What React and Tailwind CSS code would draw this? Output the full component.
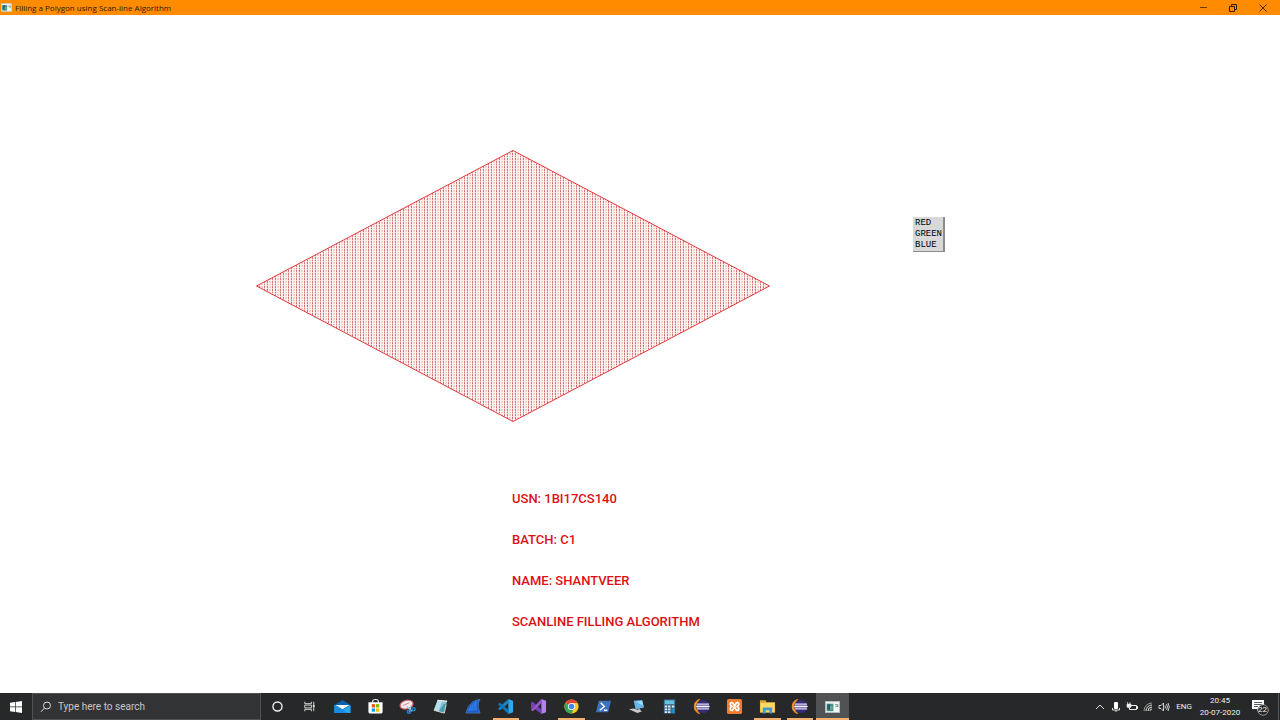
import React from "react";

const DETAILS = ["USN: 1BI17CS140", "BATCH: C1", "NAME: SHANTVEER", "SCANLINE FILLING ALGORITHM"];
const COLORS = ["RED", "GREEN", "BLUE"];

function ProgramIcon({ className }) {
  return (
    <svg viewBox="0 0 18 14" className={className} aria-hidden="true">
      <rect x="0.5" y="0.5" width="17" height="13" fill="#f2f5f4" stroke="#b9c4c4" />
      <rect x="2" y="3" width="8" height="9" fill="#3f8f86" />
      <path d="M3 4h3v6H3z" fill="#27556b" />
      <path d="M6 6h3v4H6z" fill="#69b37c" />
      <path d="M12 4h4M12 6h2" stroke="#899" strokeWidth="1" />
      <rect x="14" y="5" width="2" height="2" fill="#3c9a5a" />
    </svg>
  );
}

function TitleBar() {
  return (
    <header className="flex h-[15px] shrink-0 items-center bg-[#ff8c00] text-[#2b1600]">
      <ProgramIcon className="ml-px h-[9px] w-[11px]" />
      <h1 className="ml-[3px] flex-1 text-[8px] leading-[15px]">Filling a Polygon using Scan-line Algorithm</h1>
      <button aria-label="Minimize" className="flex h-full w-[30px] items-center justify-center">
        <svg viewBox="0 0 8 8" className="size-2"><path d="M1 3.5h7" stroke="#6b3c00" /></svg>
      </button>
      <button aria-label="Restore" className="flex h-full w-[30px] items-center justify-center">
        <svg viewBox="0 0 8 8" className="size-2" fill="none" stroke="#3a1d00">
          <path d="M0.5 2.5h5v5h-5zM2.5 2.5v-2h5v5h-2" />
        </svg>
      </button>
      <button aria-label="Close" className="mr-[2px] flex h-full w-[30px] items-center justify-center">
        <svg viewBox="0 0 8 8" className="size-2"><path d="M0.5 0.5l7 7M7.5 0.5l-7 7" stroke="#3a1d00" strokeWidth="0.9" /></svg>
      </button>
    </header>
  );
}

function Polygon() {
  return (
    <svg viewBox="0 0 514 272" className="ml-[20%] mt-[135px] block h-[272px] w-[514px]" role="img" aria-label="Filled polygon">
      <defs>
        <pattern id="scan" width="8" height="8" patternUnits="userSpaceOnUse" shapeRendering="crispEdges">
          <rect width="8" height="8" fill="#fff4f4" />
          <path d="M0 0h8v2H0zM0 3h8v2H0zM0 6h8v1H0z" fill="#ffe4e4" />
          <path d="M1 0h1v8H1zM4 0h1v8H4zM7 0h1v8H7z" fill="#fffafa" />
          <path d="M0 0h1v8H0zM3 0h1v8H3z" fill="#f0c4c6" />
          <path d="M0 0h1v2H0zM0 3h1v2H0zM0 6h1v1H0zM3 0h1v2H3zM3 3h1v2H3zM3 6h1v1H3z" fill="#cf7478" />
          <path d="M5 0h2v2H5zM5 3h2v2H5zM5 6h2v1H5z" fill="#ffcaca" />
        </pattern>
      </defs>
      <path d="M257 0.5L513.5 136L257 271.5L0.5 136Z" fill="url(#scan)" stroke="#e0383c" strokeWidth="1" />
    </svg>
  );
}

function ColorMenu() {
  return (
    <div
      role="menu"
      className="absolute left-[913px] top-[202px] flex w-8 flex-col border-b border-r-2 border-[#8c8c8c] bg-[#d8d8d8] pl-[2px] pt-px font-['Liberation_Mono',monospace] text-[9px] leading-[11px] text-black"
    >
      {COLORS.map((c) => (
        <button key={c} role="menuitem" className="block h-[11px] text-left">{c}</button>
      ))}
    </div>
  );
}

const S = "size-[17px]";

function EclipseIcon() {
  return (
    <svg viewBox="0 0 18 18" className={S}>
      <path d="M7 1.500A7.800 7.800 0 0 0 7 16.500A10 10 0 0 1 7 1.500z" fill="#ef9428" stroke="#ef9428" strokeWidth="1" />
      <circle cx="10.500" cy="9" r="7" fill="#352b78" />
      <path d="M4.200 6.500h12.800M3.700 9h13.700M4.200 11.500h12.800" stroke="#e4e0f2" strokeWidth="1.100" />
      <path d="M4 7.800h13v2.400H4z" fill="#a79fd4" />
      <path d="M3.700 9h13.700" stroke="#fff" strokeWidth="1.200" />
    </svg>
  );
}

const TASKS = [
  { name: "Cortana", icon: <svg viewBox="0 0 18 18" className={S}><circle cx="9" cy="9" r="4.8" fill="none" stroke="#eee" strokeWidth="1.5" /></svg> },
  { name: "Task View", icon: <svg viewBox="0 0 18 18" className={S} fill="none" stroke="#ddd" strokeWidth="1"><path d="M4 4v2h7V4M4 14v-2h7v2M4 7.5h7v3H4zM13.5 4v10" /><path d="M12.5 7.500h2v2h-2z" fill="#ddd" stroke="none" /></svg> },
  { name: "Mail", icon: <svg viewBox="0 0 18 18" className={S}><path d="M0.500 7.500L9 2l8.500 5.500V16H.5z" fill="#0b62b0" /><path d="M1.500 7.500h15L9 12z" fill="#fff" /><path d="M.5 7.500l8.500 5 8.500-5V16H.5z" fill="#2ba6ee" /><path d="M.5 7.500l14 8.500H.5z" fill="#1a8be0" /></svg> },
  { name: "Microsoft Store", icon: <svg viewBox="0 0 18 18" className={S}><path d="M6 5V3.500C6 1 12 1 12 3.500V5" fill="none" stroke="#eee" strokeWidth="1.200" /><path d="M1.500 4.500h15v10q0 2-2 2h-11q-2 0-2-2z" fill="#fff" /><path d="M5 6.500h3.500V10H5z" fill="#f25022" /><path d="M9.500 6.500H13V10H9.500z" fill="#7fba00" /><path d="M5 11h3.500v3.500H5z" fill="#00a4ef" /><path d="M9.500 11H13v3.500H9.500z" fill="#ffb900" /></svg> },
  { name: "Snipping Tool", icon: <svg viewBox="0 0 18 18" className={S}><ellipse cx="8" cy="7" rx="7" ry="4.500" transform="rotate(-15 8 7)" fill="#eee" stroke="#d1616b" strokeWidth="1.300" /><path d="M4 8l7-3" stroke="#c88" /><path d="M8 9l6 5M13 7l-2 8" stroke="#b8ccdc" strokeWidth="1.300" /><circle cx="10.500" cy="14.500" r="1.600" fill="none" stroke="#287dcb" strokeWidth="1.600" /><circle cx="15.500" cy="12" r="1.600" fill="none" stroke="#287dcb" strokeWidth="1.600" /></svg> },
  { name: "Notepad", icon: <svg viewBox="0 0 18 18" className={S}><path d="M6 2l10 1-3 13-11-3z" fill="#86c3d2" /><path d="M6 2l5 .5-4 11.500-5-1z" fill="#b4dfe8" /><path d="M12 7l3-1-2 10-6-1.500z" fill="#4a9bb2" /><path d="M6 2.500l10 1" stroke="#e8e8e8" strokeWidth="1.300" /><path d="M2 13l11 3 2-9" fill="none" stroke="#ded8c0" /></svg> },
  { name: "Wireshark", icon: <svg viewBox="0 0 18 18" className={S}><path d="M1 16C3 8 8 2 16 1.500c-3 4-2 9 0 14.500z" fill="#1c5cc4" stroke="#5a8fd8" strokeWidth="0.600" /><path d="M3 14C5 8 9 4 14 3c-2 3-2 7-1 10z" fill="#2a76e0" /></svg> },
  { name: "Visual Studio Code", open: true, icon: <svg viewBox="0 0 18 18" className={S}><path d="M12 1l5 2v12l-5 2z" fill="#2fa9ec" /><path d="M12 1v4.500L3 13l-2-1.500z" fill="#1687cc" /><path d="M1 6.500L3 5l9 7.500V17z" fill="#087abd" /></svg> },
  { name: "Visual Studio", icon: <svg viewBox="0 0 18 18" className={S}><path d="M12 1l5 2v12l-5 2z" fill="#b182e9" /><path d="M1 5l2-1 9 8.500V17L3 10v3l-2-1z" fill="#7541b8" /><path d="M12 1v4.500L3 14l-2-1z" fill="#9857d3" /></svg> },
  { name: "Google Chrome", open: true, icon: <svg viewBox="0 0 18 18" className={S}><circle cx="9" cy="9" r="7.500" fill="#f9c829" /><path d="M9 9L2.500 5.300A7.500 7.500 0 0 1 15.500 5.300H9z" fill="#e44235" /><path d="M9 9L2.500 5.300A7.500 7.500 0 0 0 8.800 16.500L12 10.800z" fill="#36a853" /><circle cx="9" cy="9" r="3.800" fill="#fff" /><circle cx="9" cy="9" r="2.900" fill="#4285ee" /></svg> },
  { name: "PowerShell", icon: <svg viewBox="0 0 18 18" className={S}><path d="M4 3h13l-3 12H1z" fill="#3d70bd" /><path d="M6 5l4 4-5 4M9.500 13H13" fill="none" stroke="#fff" strokeWidth="1.500" /></svg> },
  { name: "Remote Desktop", icon: <svg viewBox="0 0 18 18" className={S}><path d="M6 3l9-1 2 8-9 2z" fill="#65b6e6" /><path d="M8 4l7-1 1 5z" fill="#9bdcf8" /><path d="M11 11l2 3" stroke="#aaa" strokeWidth="2" /><path d="M1 12l5-1 9 3-5 2z" fill="#cacaca" /></svg> },
  { name: "Calculator", icon: <svg viewBox="0 0 18 18" className={S}><path d="M3 1.500h12v15H3z" fill="#38698b" /><path d="M4 2.500h10v4H4z" fill="#65c3e0" /><path d="M4 8h2.500v2H4zM7.500 8H10v2H7.500zM4 11h2.500v2H4zM7.500 11H10v2H7.500zM4 14h2.500v2H4zM7.500 14H10v2H7.500zM11.500 8H14v2h-2.500z" fill="#e1e9ee" /><path d="M11.500 11H14v5h-2.500z" fill="#1a91ce" /></svg> },
  { name: "Eclipse", icon: <EclipseIcon /> },
  { name: "XAMPP", icon: <svg viewBox="0 0 18 18" className={S}><rect x="1" y="1" width="16" height="16" rx="2" fill="#ee7d31" /><path d="M7 5H5.500Q4.500 5 4.500 6.500T6.500 9Q4.500 9.500 4.500 11.500T6 13H7L11 5h1.500q1 0 1 1.500T11.500 9q2 .5 2 2.500T12 13h-1L7 5" fill="none" stroke="#fff" strokeWidth="1.800" strokeLinejoin="round" /></svg> },
  { name: "File Explorer", open: true, icon: <svg viewBox="0 0 18 18" className={S}><path d="M1 2.500h6l1 2h9v11H1z" fill="#dda62c" /><path d="M1.500 5h15v10h-15z" fill="#ffd766" /><path d="M4 16.500V10h10v6.500h-3V13H7v3.500z" fill="#3f99d7" /></svg> },
  { name: "Eclipse workspace", open: true, icon: <EclipseIcon /> },
  { name: "Polygon program", open: true, active: true, icon: <ProgramIcon className="h-3 w-[15px]" /> },
];

function Tray() {
  return (
    <div className="ml-auto flex h-full items-center font-[Roboto,sans-serif] text-[#eee]">
      <button aria-label="Show hidden icons" className="flex w-4 justify-center">
        <svg viewBox="0 0 10 10" className="size-[10px]"><path d="M1 7l4-4 4 4" fill="none" stroke="#ddd" /></svg>
      </button>
      <button aria-label="Microphone" className="flex w-4 justify-center">
        <svg viewBox="0 0 10 12" className="h-3 w-[10px]"><rect x="3" y="1" width="4" height="7" rx="1" fill="#fff" /><path d="M1.500 7v2h7V7M5 9v2" fill="none" stroke="#ddd" /></svg>
      </button>
      <button aria-label="Battery" className="flex w-4 justify-center">
        <svg viewBox="0 0 12 10" className="h-[10px] w-3"><path d="M5 3.500h5.500v4H3.500V6" fill="none" stroke="#eee" /><path d="M11 4.500h1v2h-1zM1 2h4v3L3 6 1 5zM1.500 0v2M4 0v2" fill="#eee" stroke="#eee" strokeWidth="0.600" /></svg>
      </button>
      <button aria-label="Network" className="flex w-4 justify-center">
        <svg viewBox="0 0 12 12" className="size-3" fill="none"><path d="M2 10A8 8 0 0 1 10 2" stroke="#999" /><path d="M4 10a6 6 0 0 1 6-6M6 10a4 4 0 0 1 4-4M8 10a2 2 0 0 1 2-2" stroke="#ddd" /></svg>
      </button>
      <button aria-label="Volume" className="flex w-4 justify-center">
        <svg viewBox="0 0 12 12" className="size-3" fill="none" stroke="#ddd" strokeWidth="0.900"><path d="M1 4.500h2L5.500 2v8L3 7.500H1z" /><path d="M7 4.500q1 1.500 0 3M8.500 3q2 3 0 6M10 2q2.500 4 0 8" /></svg>
      </button>
      <button aria-label="Input language" className="flex w-6 justify-center text-[8px]">ENG</button>
      <button aria-label="Date and time" className="w-12 text-center text-[8px] leading-[12px]">
        <span className="block">20:45</span>
        <span className="block">20-07-2020</span>
      </button>
      <button aria-label="22 notifications" className="relative flex h-full w-[34px] items-center justify-center">
        <svg viewBox="0 0 20 18" className="h-[18px] w-5">
          <path d="M1 2h12v9H8l-2 2v-2H1z" fill="#fff" />
          <path d="M3 4.500h8M3 6.500h8M3 8.500h4" stroke="#333" strokeWidth="0.800" />
          <circle cx="12" cy="12" r="5.300" fill="#292929" stroke="#aaa" strokeWidth="0.800" />
        </svg>
        <span className="absolute left-[14px] top-[11px] text-[8px] leading-[12px]">22</span>
      </button>
      <span className="h-full w-[2px] border-l border-[#555]" />
    </div>
  );
}

function Taskbar() {
  return (
    <footer className="flex h-[27px] shrink-0 items-center bg-[#272829]">
      <button aria-label="Start" className="flex h-full w-8 items-center justify-center">
        <svg viewBox="0 0 12 12" className="size-3"><path d="M0 1.800l5-.7v4.500H0zM5.700 1L12 0v5.600H5.700zM0 6.300h5v4.600l-5-.7zM5.700 6.300H12V12l-6.300-.9z" fill="#fff" /></svg>
      </button>
      <label className="flex h-full w-[229px] items-center border border-[#505153] bg-[#323334]">
        <svg viewBox="0 0 12 12" className="ml-[7px] size-3" fill="none" stroke="#ddd"><circle cx="7" cy="4.500" r="3.500" /><path d="M4.500 7L1 10.800" /></svg>
        <input type="text" aria-label="Search" placeholder="Type here to search" className="ml-[6px] min-w-0 flex-1 bg-transparent font-[Roboto,sans-serif] text-[10px] leading-4 text-white outline-none placeholder:text-[#c8c8c8] placeholder:opacity-100" />
      </label>
      <nav aria-label="Applications" className="grid h-full w-[588px] grid-cols-18">
        {TASKS.map((t) => (
          <button
            key={t.name}
            aria-label={t.name}
            className={
              "flex items-center justify-center border-t-2 border-b-2 border-t-transparent " +
              (t.open ? "border-b-[#f6b171] " : "border-b-transparent ") +
              (t.active ? "bg-[#515253]" : t.open ? "mx-[3px]" : "")
            }
          >
            {t.icon}
          </button>
        ))}
      </nav>
      <Tray />
    </footer>
  );
}

export default function App() {
  return (
    <div className="flex min-h-screen flex-col bg-white font-['Open_Sans','Noto_Sans',sans-serif]">
      <TitleBar />
      <main className="relative flex-1">
        <Polygon />
        <div className="ml-[40%] mt-[56px] font-[Roboto,Arial,sans-serif] text-[13px] font-medium leading-[41px] text-[#dc1014]">
          {DETAILS.map((d) => (
            <p key={d}>{d}</p>
          ))}
        </div>
        <ColorMenu />
      </main>
      <Taskbar />
    </div>
  );
}
